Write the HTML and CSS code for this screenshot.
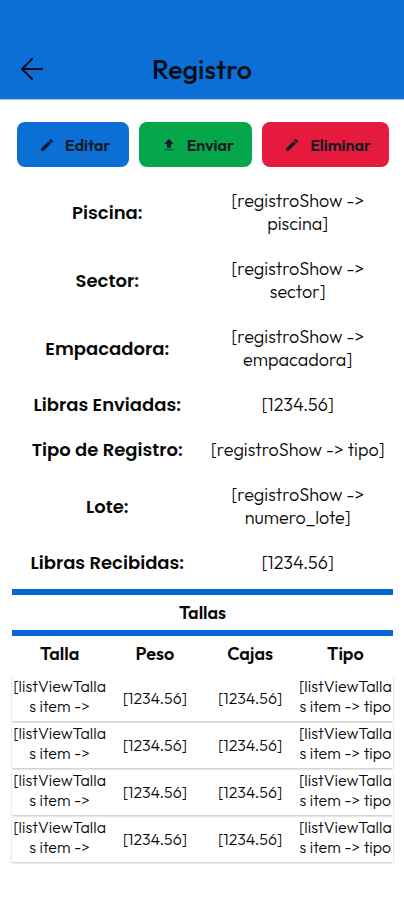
FILE: index.html
```html
<!DOCTYPE html>
<html lang="es">
<head>
    <meta charset="UTF-8">
    <meta name="viewport" content="width=device-width, initial-scale=1.0">
    <title>Registro</title>
    <link rel="stylesheet" href="styles.css">
</head>
<body>
    <header class="header">
        <a href="#" class="back" aria-label="Volver">
            <svg width="24" height="24" viewBox="0 0 24 24" fill="none" stroke="currentColor" stroke-width="2" stroke-linecap="round" stroke-linejoin="round"><path d="M22 12H2M12 2 2 12l10 10"/></svg>
        </a>
        <h1>Registro</h1>
    </header>

    <main>
        <div class="actions">
            <button type="button" class="btn edit">
                <svg width="16" height="16" viewBox="0 0 24 24" fill="currentColor"><path d="M3 17.25V21h3.75L17.81 9.94l-3.75-3.75L3 17.25zM20.71 7.04a1 1 0 0 0 0-1.41l-2.34-2.34a1 1 0 0 0-1.41 0l-1.83 1.83 3.75 3.75 1.83-1.83z"/></svg>
                Editar
            </button>
            <button type="button" class="btn send">
                <svg width="16" height="16" viewBox="0 0 24 24" fill="currentColor"><path d="M9 16h6v-6h4l-7-7-7 7h4z"/><path opacity=".5" d="M5 18h14v2H5z"/></svg>
                Enviar
            </button>
            <button type="button" class="btn delete">
                <svg width="16" height="16" viewBox="0 0 24 24" fill="currentColor"><path d="M3 17.25V21h3.75L17.81 9.94l-3.75-3.75L3 17.25zM20.71 7.04a1 1 0 0 0 0-1.41l-2.34-2.34a1 1 0 0 0-1.41 0l-1.83 1.83 3.75 3.75 1.83-1.83z"/></svg>
                Eliminar
            </button>
        </div>

        <dl class="details">
            <div class="row"><dt>Piscina:</dt><dd>[registroShow -&gt; piscina]</dd></div>
            <div class="row"><dt>Sector:</dt><dd>[registroShow -&gt; sector]</dd></div>
            <div class="row"><dt>Empacadora:</dt><dd>[registroShow -&gt; empacadora]</dd></div>
            <div class="row"><dt>Libras Enviadas:</dt><dd>[1234.56]</dd></div>
            <div class="row"><dt>Tipo de Registro:</dt><dd>[registroShow -&gt; tipo]</dd></div>
            <div class="row"><dt>Lote:</dt><dd>[registroShow -&gt; numero_lote]</dd></div>
            <div class="row"><dt>Libras Recibidas:</dt><dd>[1234.56]</dd></div>
        </dl>

        <section class="sizes">
            <h2>Tallas</h2>
            <table>
                <thead>
                    <tr><th>Talla</th><th>Peso</th><th>Cajas</th><th>Tipo</th></tr>
                </thead>
                <tbody>
                    <tr><td>[listViewTalla<br>s item -&gt;</td><td>[1234.56]</td><td>[1234.56]</td><td>[listViewTalla<br>s item -&gt; tipo</td></tr>
                    <tr><td>[listViewTalla<br>s item -&gt;</td><td>[1234.56]</td><td>[1234.56]</td><td>[listViewTalla<br>s item -&gt; tipo</td></tr>
                    <tr><td>[listViewTalla<br>s item -&gt;</td><td>[1234.56]</td><td>[1234.56]</td><td>[listViewTalla<br>s item -&gt; tipo</td></tr>
                    <tr><td>[listViewTalla<br>s item -&gt;</td><td>[1234.56]</td><td>[1234.56]</td><td>[listViewTalla<br>s item -&gt; tipo</td></tr>
                </tbody>
            </table>
        </section>
    </main>
</body>
</html>
```
FILE: styles.css
```css
* {
    box-sizing: border-box;
}
body {
    margin: 0;
    font-family: Outfit, Lato, sans-serif;
    font-size: 18px;
    line-height: 23px;
    color: #080808;
    background-color: #fff;
}
.header {
    display: grid;
    grid-template-columns: 24px 1fr 24px;
    align-items: center;
    padding: 53px 20px 14px;
    background-color: #0b6fd6;
    border-bottom: 1px solid #a9c8ef;
    color: #050d18;
}
.back {
    display: flex;
    color: inherit;
}
h1 {
    margin: 0;
    font-size: 27px;
    font-weight: 500;
    line-height: 32px;
    text-align: center;
}
main {
    padding: 22px 11px 22px 12px;
}
.actions {
    display: flex;
    gap: 10px;
    padding: 0 4px 0 5px;
}
.btn {
    display: flex;
    flex: 1 1 auto;
    align-items: center;
    justify-content: center;
    gap: 10px;
    height: 45px;
    padding: 0 16px 0 20px;
    border: none;
    border-radius: 8px;
    font-family: inherit;
    font-size: 16px;
    font-weight: 600;
    color: #111a22;
    cursor: pointer;
}
.edit {
    background-color: #0b6fd6;
}
.send {
    background-color: #06a64b;
}
.delete {
    background-color: #e51a3c;
}
.details {
    margin: 11px 0 4px;
}
.row {
    display: grid;
    grid-template-columns: 1fr 1fr;
    align-items: center;
    padding: 11px 0;
    text-align: center;
}
dt {
    font-family: Poppins, Inter, sans-serif;
    font-weight: 600;
}
dd {
    margin: 0;
    padding: 0 6px;
    font-weight: 300;
}
h2 {
    margin: 0;
    padding: 6px 0;
    border-top: 6px solid #0765d8;
    border-bottom: 6px solid #0765d8;
    font-size: 18px;
    font-weight: 600;
    text-align: center;
}
table {
    width: 100%;
    table-layout: fixed;
    border-collapse: separate;
    border-spacing: 0 2px;
}
th {
    height: 36px;
    padding: 0 0 5px;
    font-size: 18px;
    font-weight: 600;
}
td {
    height: 45px;
    padding: 0 0 2px;
    font-size: 16px;
    font-weight: 300;
    line-height: 20px;
    text-align: center;
    white-space: nowrap;
}
td:first-child,
td:last-child {
    padding-bottom: 5px;
}
tbody tr {
    box-shadow: 0 1px 2px rgba(0, 0, 0, 0.25);
}
```
